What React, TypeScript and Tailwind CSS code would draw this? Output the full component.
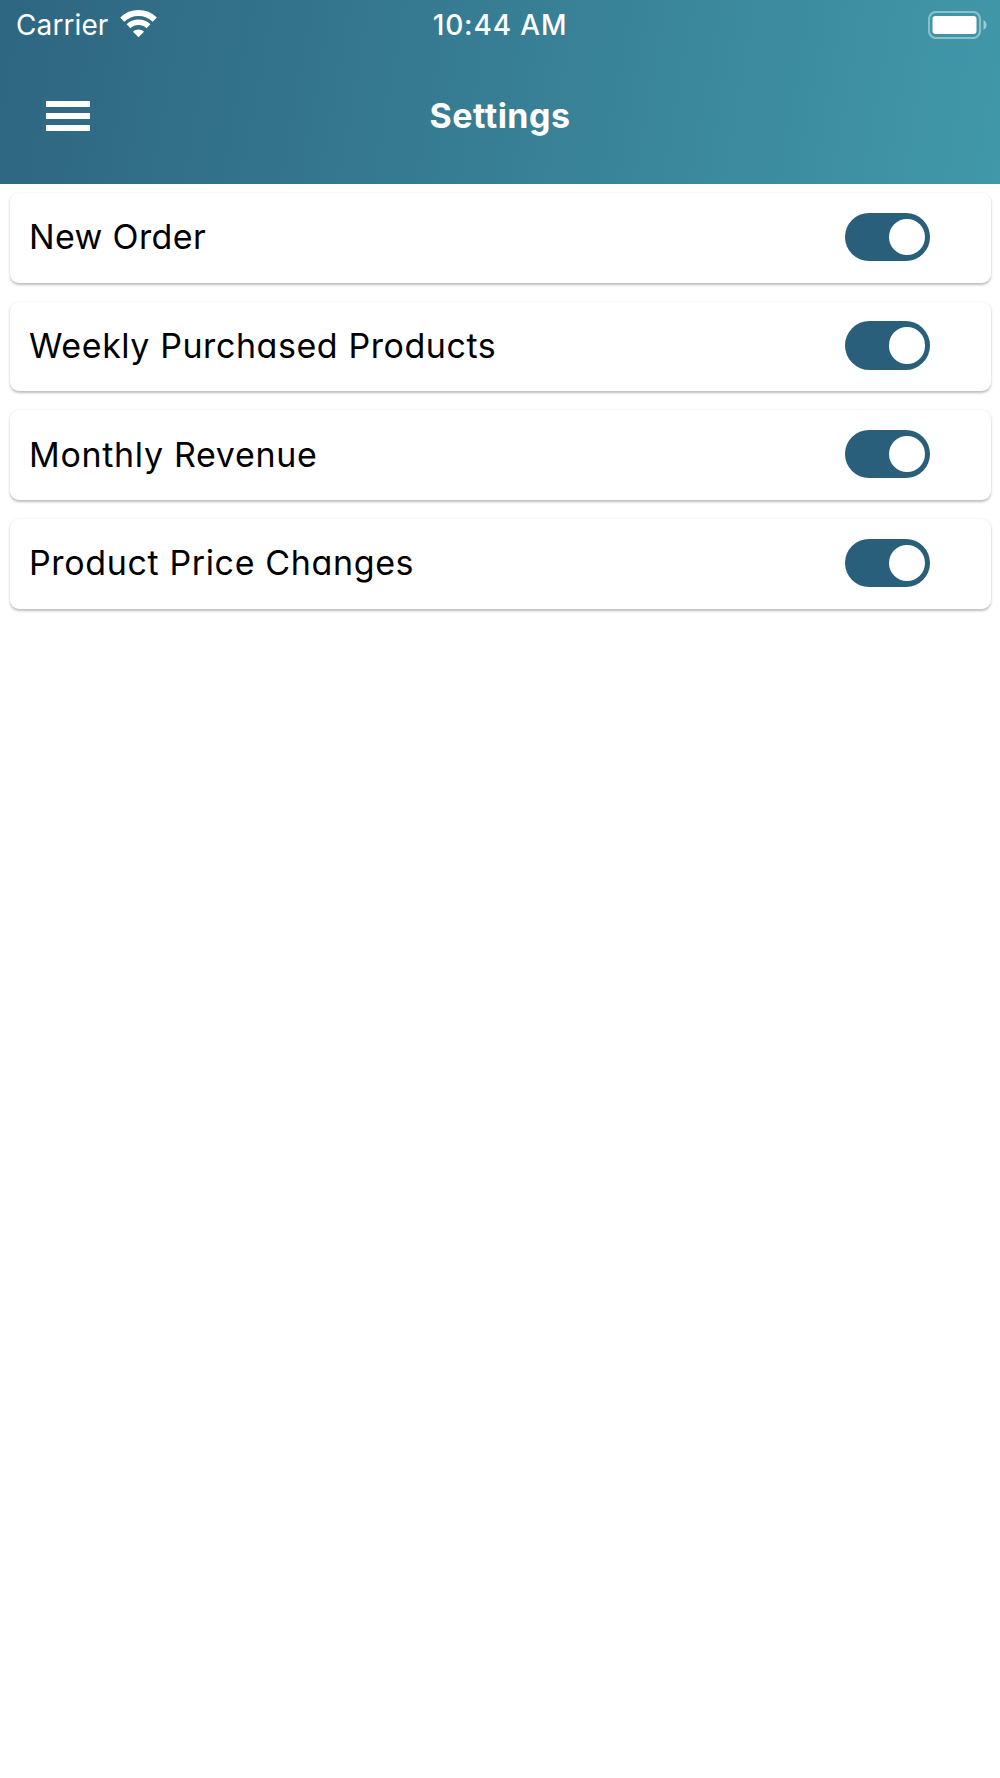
import { useState } from 'react';

const ROWS = [
  { id: 'order', label: 'New Order', tracking: 'tracking-[0.35px]' },
  { id: 'weekly', label: 'Weekly Purchased Products', tracking: 'tracking-[0.57px]' },
  { id: 'revenue', label: 'Monthly Revenue', tracking: 'tracking-[0.68px]' },
  { id: 'price', label: 'Product Price Changes', tracking: 'tracking-[0.63px]' },
];

export default function App() {
  return (
    <div className="flex min-h-[1778px] w-full flex-col bg-white font-['Inter',sans-serif]">
      <header className="h-[183.5px] bg-[linear-gradient(100deg,#2e6681_0%,#377e94_50%,#4198a8_100%)] text-white">
        <StatusBar />
        <div className="grid h-[134px] grid-cols-[1fr_auto_1fr] items-center px-[45.5px]">
          <button aria-label="Menu" className="flex w-11 flex-col gap-[6.5px]">
            <span className="h-[5.5px] w-11 bg-white" />
            <span className="h-[5.5px] w-11 bg-white" />
            <span className="h-[5.5px] w-11 bg-white" />
          </button>
          <h1 className="-mt-px text-[34px] font-bold leading-none tracking-[0.5px]">Settings</h1>
        </div>
      </header>

      <main className="flex flex-col gap-[19.2px] px-[9.5px] pt-[9.5px]">
        {ROWS.map((row) => (
          <SettingRow key={row.id} label={row.label} tracking={row.tracking} />
        ))}
      </main>
    </div>
  );
}

function StatusBar() {
  return (
    <div className="grid h-[49px] grid-cols-3 items-center px-4 pt-px text-[28px]">
      <div className="flex items-center gap-[11.5px]">
        <span className="tracking-[0.1px]">Carrier</span>
        <WifiIcon />
      </div>
      <span className="text-center font-medium tracking-[0.85px]">10:44 AM</span>
      <div className="-mr-[3px] flex justify-end">
        <BatteryIcon />
      </div>
    </div>
  );
}

function WifiIcon() {
  return (
    <svg width="37" height="28" viewBox="0 0 37 28" fill="none" className="-mt-[2px]">
      <path d="M2.2 9.6C11.5 0.9 25.5 0.9 34.8 9.6" stroke="white" strokeWidth="6" />
      <path d="M8.5 16.2C14 11 23 11 28.5 16.2" stroke="white" strokeWidth="5.6" />
      <path d="M13 21.8C16 18.8 21 18.8 24 21.8L18.5 27.3Z" fill="white" />
    </svg>
  );
}

function BatteryIcon() {
  return (
    <svg width="59" height="28" viewBox="0 0 59 28" fill="none" className="-mt-px">
      <rect x="1" y="1" width="51" height="26" rx="7" stroke="white" strokeOpacity="0.4" strokeWidth="2.2" />
      <rect x="4.5" y="5" width="44" height="18" rx="3" fill="white" />
      <path d="M55.5 9C59.5 11 59.5 17 55.5 19Z" fill="white" fillOpacity="0.5" />
    </svg>
  );
}

function SettingRow({ label, tracking }: { label: string; tracking: string }) {
  const [enabled, setEnabled] = useState(true);

  return (
    <div className="flex h-[89.5px] items-center justify-between rounded-[9px] bg-white pb-px pl-[19.5px] pr-[60.5px] shadow-[0_1.8px_2.5px_rgba(0,0,0,0.26)]">
      <span className={`whitespace-nowrap text-[34px] leading-none text-black [font-feature-settings:'cv11'] ${tracking}`}>
        {label}
      </span>
      <button
        role="switch"
        aria-checked={enabled}
        aria-label={label}
        onClick={() => setEnabled(!enabled)}
        className={`-mt-px flex h-[48.5px] w-[85px] items-center rounded-full px-[5px] ${
          enabled ? 'justify-end bg-[#295f7b]' : 'justify-start bg-gray-300'
        }`}
      >
        <span className="size-[36.5px] rounded-full bg-white" />
      </button>
    </div>
  );
}
